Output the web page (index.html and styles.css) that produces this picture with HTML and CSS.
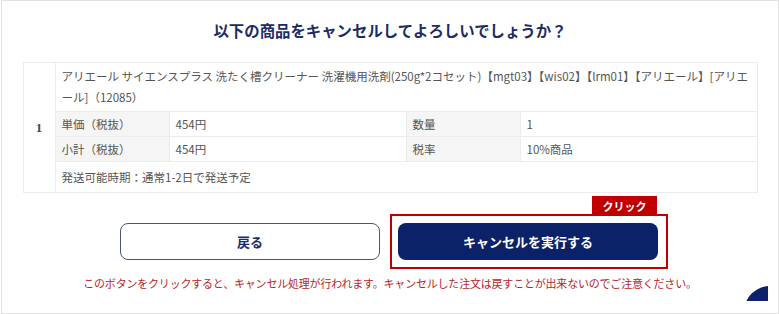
FILE: index.html
```html
<!DOCTYPE html>
<html lang="ja">
    <head>
        <meta charset="UTF-8">
        <meta name="viewport" content="width=device-width, initial-scale=1.0">
        <title>注文キャンセル</title>
        <link rel="stylesheet" href="styles.css">
    </head>
    <body>
        <div class="panel">
            <div class="panel-title">以下の商品をキャンセルしてよろしいでしょうか？</div>

            <!-- cancel target items -->
            <table class="item-table">
                <colgroup>
                    <col class="col-num">
                    <col class="col-label">
                    <col class="col-value">
                    <col class="col-label">
                    <col>
                </colgroup>
                <tbody>
                    <tr>
                        <td class="item-num" rowspan="4">1</td>
                        <td class="item-name" colspan="4">アリエール サイエンスプラス 洗たく槽クリーナー 洗濯機用洗剤(250g*2コセット)【mgt03】【wis02】【lrm01】【アリエール】[アリエール]（12085）</td>
                    </tr>
                    <tr>
                        <th>単価（税抜）</th>
                        <td>454円</td>
                        <th>数量</th>
                        <td>1</td>
                    </tr>
                    <tr>
                        <th>小計（税抜）</th>
                        <td>454円</td>
                        <th>税率</th>
                        <td>10%商品</td>
                    </tr>
                    <tr>
                        <td class="item-ship" colspan="4">発送可能時期：通常1-2日で発送予定</td>
                    </tr>
                </tbody>
            </table>

            <div class="button-row">
                <button class="btn btn-back">戻る</button>
                <div class="btn-wrap">
                    <button class="btn btn-cancel">キャンセルを実行する</button>
                    <!-- annotation -->
                    <div class="click-frame"></div>
                    <div class="click-tag">クリック</div>
                </div>
            </div>

            <p class="notice">このボタンをクリックすると、キャンセル処理が行われます。キャンセルした注文は戻すことが出来ないのでご注意ください。</p>

            <div class="page-top"><span></span></div>
        </div>
    </body>
</html>
```

FILE: styles.css
```css
html, body {
    margin: 0;
    padding: 0;
    background: #fff;
}
body {
    font-family: "Noto Sans CJK JP", "Liberation Sans", sans-serif;
    color: #555;
}
.panel {
    position: relative;
    box-sizing: border-box;
    width: 778px;
    height: 314px;
    margin-left: 1px;
    border: 1px solid #e2e2e2;
    padding-top: 17px;
}
.panel-title {
    text-align: center;
    color: #1b2c66;
    font-size: 15.4px;
    font-weight: bold;
    line-height: 24px;
    margin-bottom: 20px;
}

.item-table {
    width: 735px;
    margin: 0 auto;
    border-collapse: collapse;
    table-layout: fixed;
    font-size: 11.5px;
    line-height: 16px;
}
.item-table th, .item-table td {
    border: 1px solid #ececec;
    padding: 4px 6px;
    text-align: left;
    font-weight: normal;
}
.item-table th {
    background-color: #f5f5f5;
}
.col-num { width: 32px; }
.col-label { width: 114px; }
.col-value { width: 237px; }
.item-table .item-num {
    text-align: center;
    font-family: "Liberation Serif", serif;
    font-weight: bold;
    font-size: 13px;
    color: #444;
    padding: 0;
}
.item-table .item-name {
    line-height: 21px;
    padding: 3px 6px 3px;
}
.item-table .item-ship {
    padding: 7px 6px;
}

.button-row {
    display: flex;
    justify-content: center;
    gap: 18px;
    margin-top: 30px;
    padding-right: 2px;
}
.btn {
    box-sizing: border-box;
    width: 260px;
    height: 37px;
    border-radius: 8px;
    font-family: inherit;
    font-size: 13px;
    font-weight: bold;
    cursor: pointer;
}
.btn-back {
    background: #fff;
    color: #1b2c66;
    border: 1px solid #4a5575;
}
.btn-cancel {
    background: #0c2268;
    color: #fff;
    border: none;
}
.btn-wrap {
    position: relative;
}
.click-frame {
    position: absolute;
    left: -8px;
    top: -9px;
    right: -10px;
    bottom: -9px;
    border: 2px solid #c00000;
}
.click-tag {
    position: absolute;
    right: 1px;
    top: -27px;
    width: 65px;
    height: 20px;
    background: #c00000;
    color: #fff;
    font-size: 11px;
    font-weight: bold;
    line-height: 20px;
    text-align: center;
}

.notice {
    margin: 15px 0 0;
    text-align: center;
    color: #b8262b;
    font-size: 11px;
    line-height: 16px;
    letter-spacing: -0.2px;
}

.page-top {
    position: absolute;
    right: 10px;
    bottom: 12px;
    width: 24px;
    height: 15px;
    overflow: hidden;
}
.page-top span {
    display: block;
    width: 52px;
    height: 52px;
    border-radius: 50%;
    background: #0c2268;
}
```
